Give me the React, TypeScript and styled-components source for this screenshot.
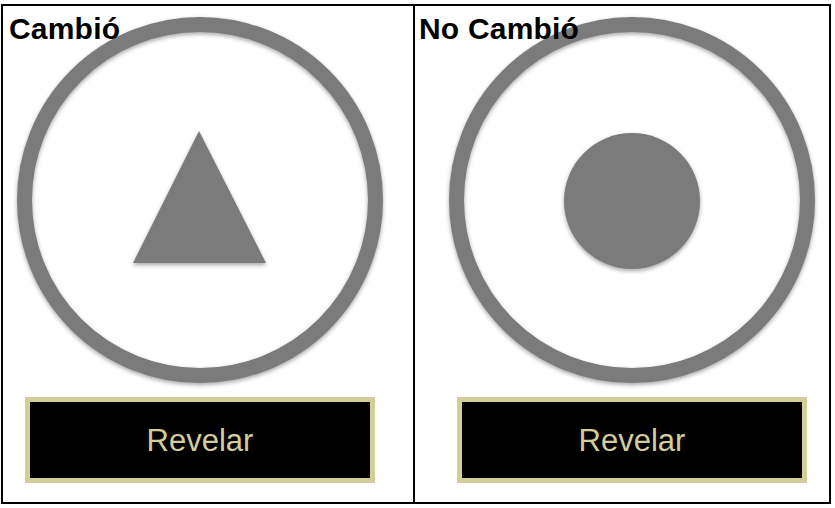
import React from "react";
import styled, { createGlobalStyle } from "styled-components";

const GlobalStyle = createGlobalStyle`
  html, body { margin: 0; padding: 0; background: #ffffff; }
  body { font-family: "Liberation Sans", Arial, Helvetica, sans-serif; }
  * { box-sizing: border-box; }
`;

const Frame = styled.div`
  margin: 4px 0 0 1px;
  width: 830px;
  height: 500px;
  border: 2px solid #000;
  display: flex;
  background: #fff;
`;

const Panel = styled.section<{ $pad: number; $divider?: boolean }>`
  position: relative;
  width: ${(p) => (p.$divider ? "412px" : "auto")};
  flex: ${(p) => (p.$divider ? "0 0 auto" : "1 1 auto")};
  border-right: ${(p) => (p.$divider ? "2px solid #000" : "none")};
  padding: 11px 0 0 ${(p) => p.$pad}px;
  display: flex;
  flex-direction: column;
  align-items: flex-start;
  gap: 14px;
`;

const Title = styled.h2<{ $left: number }>`
  position: absolute;
  top: 8px;
  left: ${(p) => p.$left}px;
  margin: 0;
  font-family: "Liberation Sans", Arial, Helvetica, sans-serif;
  font-weight: 700;
  font-size: 30px;
  letter-spacing: 0.2px;
  line-height: 1;
  color: #000;
  z-index: 1;
`;

const Dial = styled.svg`
  display: block;
  width: 366px;
  height: 366px;
  overflow: visible;
  filter: drop-shadow(0 2px 2px rgba(0, 0, 0, 0.35));
`;

const RevealButton = styled.button`
  margin-left: 8px;
  width: 350px;
  height: 86px;
  border: 5px solid #d3cf9d;
  background: #000;
  color: #d2ce99;
  font-family: "Liberation Sans", Arial, Helvetica, sans-serif;
  font-size: 31px;
  font-weight: 400;
  display: flex;
  align-items: center;
  justify-content: center;
  padding: 2px 0 0;
  cursor: pointer;
`;

const GRAY = "#7b7b7b";

function TriangleDial() {
  return (
    <Dial viewBox="0 0 366 366">
      <circle cx="183" cy="183" r="175.5" fill="none" stroke={GRAY} strokeWidth="15" />
      <polygon points="182,114 116,246 249,246" fill={GRAY} />
    </Dial>
  );
}

function DotDial() {
  return (
    <Dial viewBox="0 0 366 366">
      <circle cx="183" cy="183" r="175.5" fill="none" stroke={GRAY} strokeWidth="15" />
      <circle cx="183" cy="184" r="68" fill={GRAY} />
    </Dial>
  );
}

export default function App() {
  return (
    <>
      <GlobalStyle />
      <Frame>
        <Panel $pad={14} $divider>
          <Title $left={6}>Cambió</Title>
          <TriangleDial />
          <RevealButton>Revelar</RevealButton>
        </Panel>
        <Panel $pad={34}>
          <Title $left={4}>No Cambió</Title>
          <DotDial />
          <RevealButton>Revelar</RevealButton>
        </Panel>
      </Frame>
    </>
  );
}
